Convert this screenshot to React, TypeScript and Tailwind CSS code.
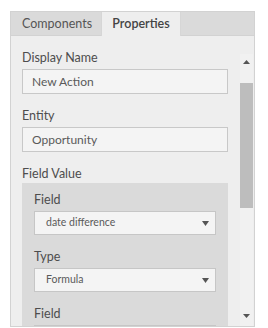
const font = { fontFamily: 'Lato, "Open Sans", sans-serif' };

function Caret() {
  return (
    <svg width="7" height="5" viewBox="0 0 7 5" className="shrink-0">
      <path d="M0 0h7L3.5 5z" fill="#555" />
    </svg>
  );
}

function Label({ children }: { children: string }) {
  return <div className="h-[19px] leading-[19px] text-[12.5px] text-[#4d4d4d] mb-[2px]">{children}</div>;
}

function TextBox({ value }: { value: string }) {
  return (
    <div className="h-[25px] border border-[#c8c8c8] bg-[#f4f4f4] pl-[9px] flex items-center text-[12px] text-[#5a5a5a]">
      {value}
    </div>
  );
}

function Select({ value }: { value: string }) {
  return (
    <div className="h-[24px] border border-[#c6c6c6] bg-[#f4f4f4] pl-[11px] pr-[6px] flex items-center justify-between text-[10.5px] text-[#5a5a5a]">
      <span>{value}</span>
      <Caret />
    </div>
  );
}

export default function App() {
  return (
    <div className="bg-white w-[268px] h-[328px] pl-[10px] pt-[11px] overflow-hidden" style={font}>
      <div className="w-[245px] border border-[#d2d2d2] bg-[#eeeeee]">
        {/* Tabs */}
        <div className="flex h-[24px]">
          <div className="w-[90px] bg-[#dadada] border-b border-[#d2d2d2] pl-[11px] text-[12.5px] leading-[23px] text-[#555]">
            Components
          </div>
          <div className="w-[80px] bg-[#eeeeee] border-x border-[#d6d6d6] text-center text-[12.5px] font-semibold leading-[23px] text-[#444]">
            Properties
          </div>
          <div className="flex-1 bg-[#dadada] border-b border-[#d2d2d2]" />
        </div>

        {/* Body */}
        <div className="flex h-[290px]">
          <div className="w-[229px] pl-[11px] pr-[12px] pt-[12px] overflow-hidden">
            <Label>Display Name</Label>
            <TextBox value="New Action" />
            <div className="mt-[12px]">
              <Label>Entity</Label>
              <TextBox value="Opportunity" />
            </div>
            <div className="mt-[12px]">
              <div className="h-[19px] leading-[19px] text-[12.5px] text-[#4d4d4d]">Field Value</div>
              <div className="bg-[#dadada] px-[12px] pt-[7px] pb-[8px]">
                <Label>Field</Label>
                <Select value="date difference" />
                <div className="mt-[12px]">
                  <Label>Type</Label>
                  <Select value="Formula" />
                </div>
                <div className="mt-[12px]">
                  <Label>Field</Label>
                  <Select value="" />
                </div>
              </div>
            </div>
          </div>

          {/* Scrollbar */}
          <div className="w-[13px] mt-[18px] bg-[#f1f1f1] flex flex-col items-center">
            <div className="h-[29px] w-full flex items-start justify-center pt-[6px]">
              <svg width="7" height="4" viewBox="0 0 7 4">
                <path d="M0 4h7L3.5 0z" fill="#555" />
              </svg>
            </div>
            <div className="w-full h-[125px] bg-[#bdbdbd]" />
            <div className="flex-1" />
            <div className="h-[16px] w-full flex items-start justify-center pt-[4px]">
              <svg width="7" height="4" viewBox="0 0 7 4">
                <path d="M0 0h7L3.5 4z" fill="#555" />
              </svg>
            </div>
          </div>
        </div>
      </div>
    </div>
  );
}
